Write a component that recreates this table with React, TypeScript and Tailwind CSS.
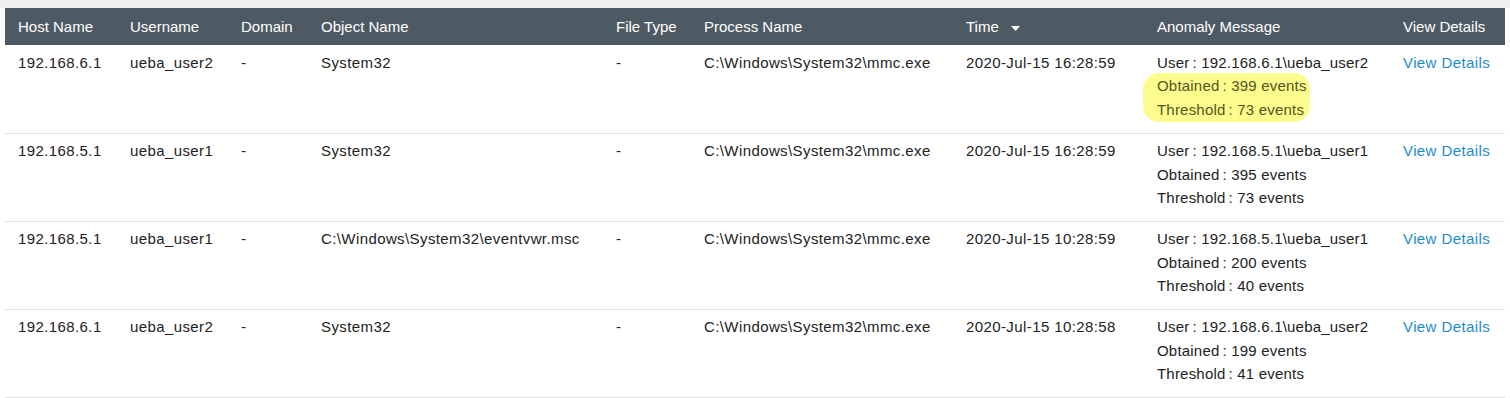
import React from "react";

type Row = {
  host: string;
  user: string;
  domain: string;
  obj: string;
  ftype: string;
  proc: string;
  time: string;
  muser: string;
  obtained: string;
  threshold: string;
  highlight?: boolean;
};

const rows: Row[] = [
  { host: "192.168.6.1", user: "ueba_user2", domain: "-", obj: "System32", ftype: "-", proc: "C:\\Windows\\System32\\mmc.exe", time: "2020-Jul-15 16:28:59", muser: "192.168.6.1\\ueba_user2", obtained: "399 events", threshold: "73 events", highlight: true },
  { host: "192.168.5.1", user: "ueba_user1", domain: "-", obj: "System32", ftype: "-", proc: "C:\\Windows\\System32\\mmc.exe", time: "2020-Jul-15 16:28:59", muser: "192.168.5.1\\ueba_user1", obtained: "395 events", threshold: "73 events" },
  { host: "192.168.5.1", user: "ueba_user1", domain: "-", obj: "C:\\Windows\\System32\\eventvwr.msc", ftype: "-", proc: "C:\\Windows\\System32\\mmc.exe", time: "2020-Jul-15 10:28:59", muser: "192.168.5.1\\ueba_user1", obtained: "200 events", threshold: "40 events" },
  { host: "192.168.6.1", user: "ueba_user2", domain: "-", obj: "System32", ftype: "-", proc: "C:\\Windows\\System32\\mmc.exe", time: "2020-Jul-15 10:28:58", muser: "192.168.6.1\\ueba_user2", obtained: "199 events", threshold: "41 events" },
];

const widths = [112, 111, 80, 295, 88, 262, 191, 246, 115];

export default function App() {
  return (
    <div
      className="w-[1510px] h-[398px] bg-white overflow-hidden text-[#222]"
      style={{ fontFamily: '"Liberation Sans", Arial, sans-serif' }}
    >
      <div className="h-[8px] bg-[#f0f0f0]" />
      <div className="px-[5px]">
        <table className="table-fixed border-collapse w-[1500px]">
          <colgroup>
            {widths.map((w, i) => (
              <col key={i} style={{ width: w }} />
            ))}
          </colgroup>
          <thead>
            <tr className="bg-[#4e5a63] text-white h-[37px] text-[15px]">
              <th className="text-left font-normal pl-[13px] pt-[2px] align-middle">Host Name</th>
              <th className="text-left font-normal pl-[13px] pt-[2px] align-middle">Username</th>
              <th className="text-left font-normal pl-[13px] pt-[2px] align-middle">Domain</th>
              <th className="text-left font-normal pl-[13px] pt-[2px] align-middle">Object Name</th>
              <th className="text-left font-normal pl-[13px] pt-[2px] align-middle">File Type</th>
              <th className="text-left font-normal pl-[13px] pt-[2px] align-middle">Process Name</th>
              <th className="text-left font-normal pl-[13px] pt-[2px] align-middle">
                <span className="inline-flex items-center gap-[12px]">
                  Time
                  <svg width="9" height="5" viewBox="0 0 9 5" className="mt-[1px]">
                    <path d="M0 0 L9 0 L4.5 5 Z" fill="#ffffff" />
                  </svg>
                </span>
              </th>
              <th className="text-left font-normal pl-[13px] pt-[2px] align-middle">Anomaly Message</th>
              <th className="text-left font-normal pl-[13px] pt-[2px] align-middle">View Details</th>
            </tr>
          </thead>
          <tbody className="text-[15px] tracking-[0.4px]">
            {rows.map((r, i) => (
              <tr key={i} className="h-[88px] border-b border-[#e1e1e1] align-top leading-[23.5px]">
                <td className="pl-[13px] pt-[5.5px] whitespace-nowrap">{r.host}</td>
                <td className="pl-[13px] pt-[5.5px] whitespace-nowrap">{r.user}</td>
                <td className="pl-[13px] pt-[5.5px]">{r.domain}</td>
                <td className="pl-[13px] pt-[5.5px] whitespace-nowrap">{r.obj}</td>
                <td className="pl-[13px] pt-[5.5px]">{r.ftype}</td>
                <td className="pl-[13px] pt-[5.5px] whitespace-nowrap">{r.proc}</td>
                <td className="pl-[13px] pt-[5.5px] whitespace-nowrap">{r.time}</td>
                <td className="pl-[13px] pt-[5.5px] relative whitespace-nowrap tracking-[0.2px]">
                  {r.highlight && (
                    <div className="absolute left-[-1px] top-[28px] w-[167px] h-[49px] bg-[#fbfb8e] rounded-[16px]" />
                  )}
                  <div className="relative">
                    <div>
                      User<span className="ml-[3px]">:</span>{" "}
                      {r.muser}
                    </div>
                    <div className={r.highlight ? "text-[#55561c]" : ""}>
                      Obtained<span className="ml-[3px]">:</span>{" "}
                      {r.obtained}
                    </div>
                    <div className={r.highlight ? "text-[#55561c]" : ""}>
                      Threshold<span className="ml-[3px]">:</span>{" "}
                      {r.threshold}
                    </div>
                  </div>
                </td>
                <td className="pl-[13px] pt-[5.5px] text-[#1b8bd1] whitespace-nowrap">View Details</td>
              </tr>
            ))}
          </tbody>
        </table>
      </div>
    </div>
  );
}
